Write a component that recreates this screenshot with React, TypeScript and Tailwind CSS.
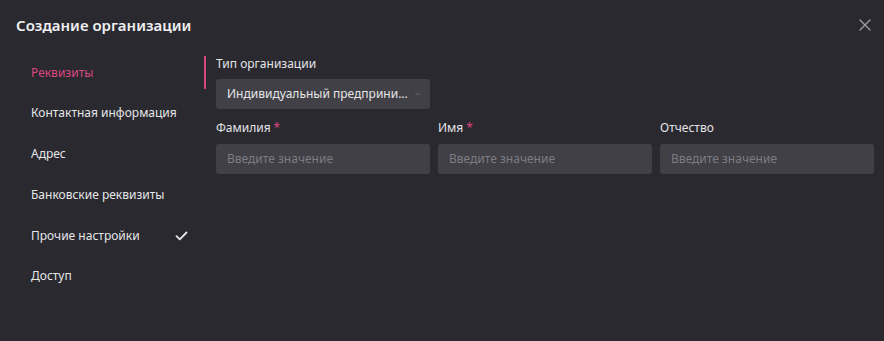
import React from "react";

const navItems = [
  "Реквизиты",
  "Контактная информация",
  "Адрес",
  "Банковские реквизиты",
  "Прочие настройки",
  "Доступ",
];

function Check() {
  return (
    <svg width="13" height="10" viewBox="0 0 13 10" fill="none">
      <path d="M1.5 5.2 L4.8 8.3 L11.5 1.5" stroke="#e8e8ea" strokeWidth="1.8" strokeLinecap="round" strokeLinejoin="round" />
    </svg>
  );
}

function Field({ label, required }: { label: string; required?: boolean }) {
  return (
    <div className="flex flex-col">
      <div className="h-[18px] flex items-center text-[12px] text-[#e4e4e6]">
        {label}
        {required && <span className="ml-[3px] text-[#d9487f]">*</span>}
      </div>
      <div className="mt-[7px] h-[30px] w-[214px] rounded-[3px] bg-[#404046] flex items-center px-[11px] text-[12px] text-[#7c7c82]">
        Введите значение
      </div>
    </div>
  );
}

export default function App() {
  return (
    <div
      className="w-[884px] h-[341px] bg-[#2a2930] text-[#e6e6e8] overflow-hidden"
      style={{ fontFamily: '"Noto Sans", "Open Sans", sans-serif' }}
    >
      <div className="flex items-center justify-between pl-[16px] pr-[13px] pt-[14px] h-[36px]">
        <div className="text-[15px] font-semibold text-[#f0f0f2] leading-[22px]">Создание организации</div>
        <svg width="12" height="12" viewBox="0 0 12 12" fill="none">
          <path d="M1 1 L11 11 M11 1 L1 11" stroke="#a0a0a6" strokeWidth="1.3" strokeLinecap="round" />
        </svg>
      </div>
      <div className="flex mt-[20px]">
        <div className="w-[206px] flex flex-col gap-[7.8px]">
          {navItems.map((item, i) => (
            <div
              key={item}
              className={`h-[33px] flex items-center justify-between pl-[31px] pr-[16px] text-[12px] whitespace-nowrap border-r-2 ${
                i === 0 ? "text-[#d9487f] border-[#d9487f]" : "text-[#e6e6e8] border-transparent"
              }`}
            >
              <span>{item}</span>
              {i === 4 && <Check />}
            </div>
          ))}
        </div>
        <div className="pl-[10px] flex flex-col">
          <div className="h-[18px] flex items-center text-[12px] text-[#e4e4e6] mt-[-1px]">Тип организации</div>
          <div className="mt-[6px] h-[30px] w-[214px] rounded-[3px] bg-[#404046] flex items-center pl-[11px] pr-[10px] text-[12px] text-[#e6e6e8]">
            <span className="whitespace-nowrap">Индивидуальный предприни...</span>
            <svg className="ml-[7px]" width="10" height="6" viewBox="0 0 10 6" fill="none">
              <path d="M1 1 L5 5 L9 1" stroke="#8a8a90" strokeWidth="1.1" strokeLinecap="round" strokeLinejoin="round" />
            </svg>
          </div>
          <div className="mt-[10px] flex gap-[8px]">
            <Field label="Фамилия" required />
            <Field label="Имя" required />
            <Field label="Отчество" />
          </div>
        </div>
      </div>
    </div>
  );
}
